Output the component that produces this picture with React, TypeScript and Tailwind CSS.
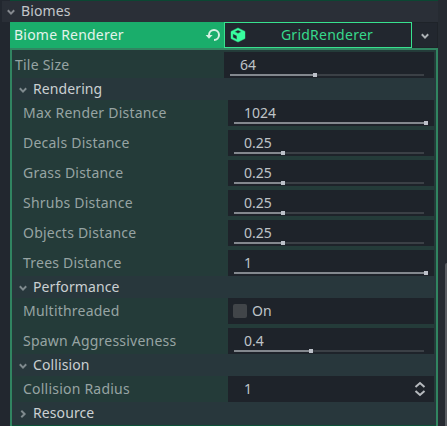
import React from "react";

type SliderProps = { label: string; value: string; start: number; knob: number; nested?: boolean };

function Chevron({ className = "", right = false }: { className?: string; right?: boolean }) {
  return (
    <svg viewBox="0 0 8 8" className={`h-2 w-2 shrink-0 ${className}`} fill="none" stroke="currentColor" strokeWidth="2">
      <path d={right ? "M2.3 0.8 5.6 4 2.3 7.2" : "M0.8 2.3 4 5.6 7.2 2.3"} />
    </svg>
  );
}

function Section({ title, collapsed = false }: { title: string; collapsed?: boolean }) {
  return (
    <div className="flex h-[22px] items-center bg-[#28373c] pl-[7px] text-[#cbd0d2]">
      <Chevron right={collapsed} className="mt-px text-[#7f8a8e]" />
      <span className="ml-[6px] tracking-[0.1px]">{title}</span>
    </div>
  );
}

function Row({ label, nested = true, children }: { label: string; nested?: boolean; children: React.ReactNode }) {
  return (
    <div className="flex h-[26px] items-center">
      <span className={`tracking-[0.22px] text-[#97a4a3] ${nested ? "w-[216px] pl-[11px]" : "w-[212px] pl-[3px]"}`}>{label}</span>
      <div className="relative mr-[2px] flex h-full flex-1 items-center bg-[#1e232a] text-[#bfc4c8]">{children}</div>
    </div>
  );
}

function SliderRow({ label, value, start, knob, nested = true }: SliderProps) {
  return (
    <Row label={label} nested={nested}>
      <span className="pl-4">{value}</span>
      <div className="absolute right-[10px] top-[22px] h-[2px] bg-[#3b4046]" style={{ left: start }} />
      <div className="absolute top-[22px] h-[2px] bg-[#83888e]" style={{ left: start, width: knob - start }} />
      <div className="absolute top-[21px] h-1 w-1 bg-[#bcc0c8]" style={{ left: knob }} />
    </Row>
  );
}

export default function App() {
  return (
    <div className="h-[426px] w-[447px] overflow-hidden bg-[#22272f] font-['Noto_Sans',sans-serif] text-[14px] leading-[20px]">
      <div className="flex h-full">
        <div className="h-full w-[438px]">
          <div className="ml-[10px] h-px bg-[#0b4632]" />
          <div className="ml-[2px] flex h-[21px] items-center bg-[#2a2f37] pb-[2px] pl-[5px] text-[#c3c6ca]">
            <Chevron className="mt-[2px] text-[#85898f]" />
            <span className="ml-[6px] tracking-[0.1px]">Biomes</span>
          </div>
          <div className="ml-[10px] flex h-[26px]">
            <div className="flex w-[214px] items-center justify-between bg-[#1aad6b] pl-1 pr-[3px] text-[#e3f4eb]">
              <span className="tracking-[0.22px]">Biome Renderer</span>
              <svg viewBox="0 0 16 16" className="h-4 w-4" fill="none">
                <path d="M4 9V8a5 5 0 1 1 5 5" stroke="#d5f0e2" strokeWidth="2" />
                <path d="M.6 8h7L4 11.8Z" fill="#d5f0e2" />
              </svg>
            </div>
            <div className="flex w-[188px] items-center border border-[#38e28f] bg-[#22272f] pl-[5px] text-[#37d98c]">
              <svg viewBox="0 0 16 16" className="h-4 w-4 shrink-0">
                <path fill="#38ff9f" fillRule="evenodd" stroke="#38ff9f" strokeWidth=".4" strokeLinejoin="round" d="M8 .9 15 4.400v7.200L8 15.100 1 11.600V4.400ZM8 3 4.600 4.700 8 6.400l3.400-1.700ZM2.900 6.700v3.800l4 2V8.700Z" />
              </svg>
              <span className="flex-1 pr-[3px] text-center tracking-[0.25px]">GridRenderer</span>
            </div>
            <div className="flex flex-1 items-center justify-center border border-l-0 border-[#1e2329] bg-[#22272f]">
              <Chevron className="mt-[2px] text-[#adb2b6]" />
            </div>
          </div>
          <div className="ml-[10px] h-[378px] border-2 border-b-0 border-[#318561] bg-[#243b39] pt-[2px]">
            <SliderRow label="Tile Size" value="64" start={6} knob={89} nested={false} />
            <Section title="Rendering" />
            <div className="flex flex-col gap-1">
              <SliderRow label="Max Render Distance" value="1024" start={6} knob={196} />
              <SliderRow label="Decals Distance" value="0.25" start={6} knob={53} />
              <SliderRow label="Grass Distance" value="0.25" start={6} knob={53} />
              <SliderRow label="Shrubs Distance" value="0.25" start={6} knob={53} />
              <SliderRow label="Objects Distance" value="0.25" start={6} knob={53} />
              <SliderRow label="Trees Distance" value="1" start={6} knob={196} />
            </div>
            <Section title="Performance" />
            <div className="flex flex-col gap-1">
              <Row label="Multithreaded">
                <div className="ml-[5px] h-[14px] w-[14px] rounded-[2px] bg-[#414549]" />
                <span className="ml-[5px]">On</span>
              </Row>
              <SliderRow label="Spawn Aggressiveness" value="0.4" start={6} knob={81} />
            </div>
            <Section title="Collision" />
            <Row label="Collision Radius">
              <span className="flex-1 pl-4">1</span>
              <svg viewBox="0 0 12 16" className="mr-2 h-4 w-3" fill="none" stroke="#b6babe" strokeWidth="2">
                <path d="M1.500 6 6 2l4.500 4M1.500 10 6 14l4.500-4" />
              </svg>
            </Row>
            <Section title="Resource" collapsed />
            <div className="h-px bg-[#28373c]" />
            <div className="h-px bg-[#0c5138]" />
          </div>
        </div>
        <div className="flex-1 bg-[#262b32]">
          <div className="ml-[7px] mt-[263px] h-[163px] rounded-tl-[2px] bg-[#595d62]" />
        </div>
      </div>
    </div>
  );
}
